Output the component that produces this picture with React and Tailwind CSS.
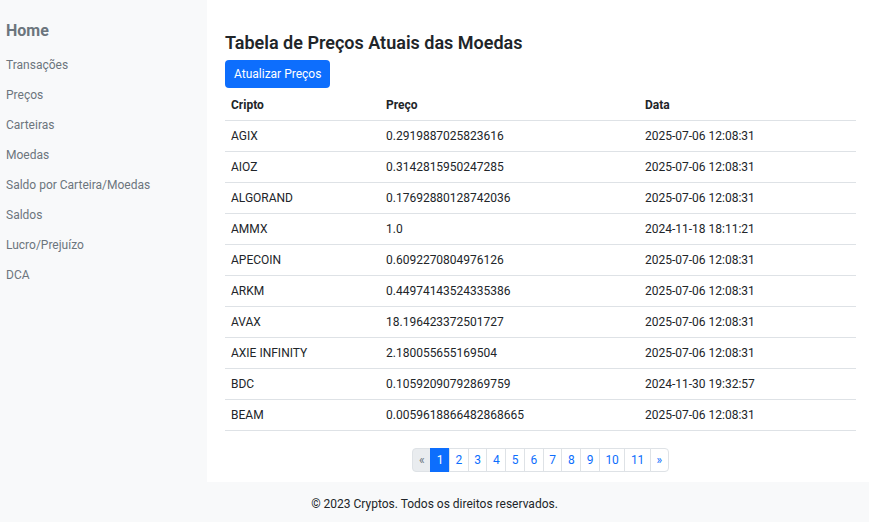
import React from 'react';

const rows = [
  ['AGIX', '0.2919887025823616', '2025-07-06 12:08:31'],
  ['AIOZ', '0.3142815950247285', '2025-07-06 12:08:31'],
  ['ALGORAND', '0.17692880128742036', '2025-07-06 12:08:31'],
  ['AMMX', '1.0', '2024-11-18 18:11:21'],
  ['APECOIN', '0.6092270804976126', '2025-07-06 12:08:31'],
  ['ARKM', '0.44974143524335386', '2025-07-06 12:08:31'],
  ['AVAX', '18.196423372501727', '2025-07-06 12:08:31'],
  ['AXIE INFINITY', '2.180055655169504', '2025-07-06 12:08:31'],
  ['BDC', '0.10592090792869759', '2024-11-30 19:32:57'],
  ['BEAM', '0.0059618866482868665', '2025-07-06 12:08:31'],
];

const links = ['Transações', 'Preços', 'Carteiras', 'Moedas', 'Saldo por Carteira/Moedas', 'Saldos', 'Lucro/Prejuízo', 'DCA'];

const pages = ['1', '2', '3', '4', '5', '6', '7', '8', '9', '10', '11'];

export default function App() {
  return (
    <div className="flex flex-col h-[522px] font-['Roboto',sans-serif] text-[#212529]">
      <div className="flex flex-1">
        {/* Sidebar */}
        <aside className="w-[207px] bg-[#f8f9fa] px-[6px] pt-[19px]">
          <h1 className="text-[16px] font-bold text-[#6c757d] leading-[24px] mb-[7px]">Home</h1>
          <ul>
            {links.map(l => (
              <li key={l} className="h-[30px] flex items-center text-[12px] text-[#6c757d]">{l}</li>
            ))}
          </ul>
        </aside>

        {/* Conteudo */}
        <main className="flex-1 bg-white pl-[18px] pr-[13px] pt-[31px]">
          <h2 className="text-[18px] font-semibold leading-[24px] mb-[5px]">Tabela de Preços Atuais das Moedas</h2>
          <button className="h-[28px] px-[9px] bg-[#0d6efd] text-white text-[12px] rounded-[4px]">Atualizar Preços</button>
          <table className="w-full mt-[2px] text-[12px]">
            <thead>
              <tr className="border-b border-[#dee2e6] h-[30px]">
                <th className="text-left font-bold px-[6px] w-[155px]">Cripto</th>
                <th className="text-left font-bold px-[6px] w-[259px]">Preço</th>
                <th className="text-left font-bold px-[6px]">Data</th>
              </tr>
            </thead>
            <tbody>
              {rows.map(r => (
                <tr key={r[0]} className="border-b border-[#dee2e6] h-[31px]">
                  <td className="px-[6px]">{r[0]}</td>
                  <td className="px-[6px]">{r[1]}</td>
                  <td className="px-[6px]">{r[2]}</td>
                </tr>
              ))}
            </tbody>
          </table>
          <div className="flex justify-center mt-[17px]">
            <ul className="flex text-[12px]">
              <li className="h-[24px] px-[5.5px] flex items-center border border-[#dee2e6] bg-[#e9ecef] text-[#6c757d] rounded-l-[4px]">«</li>
              {pages.map(p => (
                <li
                  key={p}
                  className={p === '1'
                    ? 'h-[24px] px-[5.5px] flex items-center border border-[#0d6efd] bg-[#0d6efd] text-white -ml-px'
                    : 'h-[24px] px-[5.5px] flex items-center border border-[#dee2e6] bg-white text-[#0d6efd] -ml-px'}
                >
                  {p}
                </li>
              ))}
              <li className="h-[24px] px-[5.5px] flex items-center border border-[#dee2e6] bg-white text-[#0d6efd] rounded-r-[4px] -ml-px">»</li>
            </ul>
          </div>
        </main>
      </div>
      <footer className="h-[40px] bg-[#f8f9fa] flex items-center justify-center pt-[4px] text-[12px]">
        © 2023 Cryptos. Todos os direitos reservados.
      </footer>
    </div>
  );
}
